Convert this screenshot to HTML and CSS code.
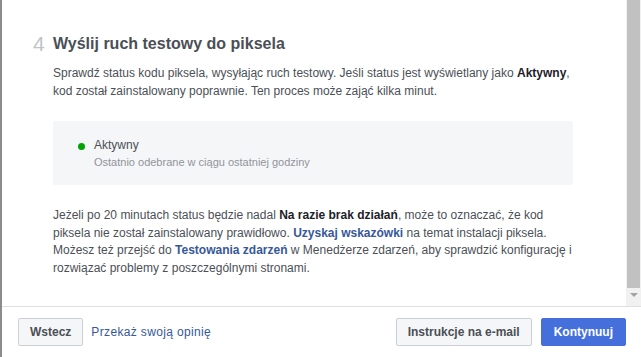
FILE: index.html
```html
<!DOCTYPE html>
<html lang="pl">
<head>
<meta charset="utf-8">
<link rel="stylesheet" href="styles.css">
</head>
<body>
<div class="frame">
  <div class="scrollarea">
    <div class="content">
      <div class="step">
        <div class="step-num">4</div>
        <div class="step-body">
          <h2 class="title">Wyślij ruch testowy do piksela</h2>
          <p class="text">Sprawdź status kodu piksela, wysyłając ruch testowy. Jeśli status jest wyświetlany jako <b>Aktywny</b>, kod został zainstalowany poprawnie. Ten proces może zająć kilka minut.</p>
          <div class="status-box">
            <span class="dot"></span>
            <div class="status-text">
              <div class="status-label">Aktywny</div>
              <div class="status-sub">Ostatnio odebrane w ciągu ostatniej godziny</div>
            </div>
          </div>
          <p class="text">Jeżeli po 20 minutach status będzie nadal <b>Na razie brak działań</b>, może to oznaczać, że kod piksela nie został zainstalowany prawidłowo. <a class="link">Uzyskaj wskazówki</a> na temat instalacji piksela. Możesz też przejść do <a class="link">Testowania zdarzeń</a> w Menedżerze zdarzeń, aby sprawdzić konfigurację i rozwiązać problemy z poszczególnymi stronami.</p>
        </div>
      </div>
    </div>
    <div class="scrollbar">
      <div class="thumb"></div>
      <div class="arrow"></div>
    </div>
  </div>
  <div class="footer">
    <div class="footer-left">
      <button class="btn">Wstecz</button>
      <a class="footer-link">Przekaż swoją opinię</a>
    </div>
    <div class="footer-right">
      <button class="btn">Instrukcje na e-mail</button>
      <button class="btn btn-primary">Kontynuuj</button>
    </div>
  </div>
</div>
</body>
</html>
```
FILE: styles.css
```css
* { box-sizing: border-box; }
html, body { margin: 0; padding: 0; }
body {
  width: 641px;
  height: 357px;
  overflow: hidden;
  background: #fff;
  font-family: "Liberation Sans", Arial, sans-serif;
  color: #4b4f56;
}
.frame {
  display: flex;
  flex-direction: column;
  height: 357px;
  border-left: 2px solid #8c8c8c;
}
.scrollarea {
  display: flex;
  height: 306px;
}
.content {
  flex: 1;
  padding: 31px 0 0 31px;
}
.step {
  display: flex;
}
.step-num {
  width: 20px;
  font-size: 21px;
  line-height: 26px;
  color: #bec3c9;
}
.step-body {
  width: 520px;
}
.title {
  margin: 0;
  font-size: 16px;
  line-height: 26px;
  font-weight: bold;
  color: #4b4f56;
}
.text {
  margin: 8px 0 0;
  font-size: 12px;
  line-height: 17.5px;
  color: #4b4f56;
}
.text b { color: #1d2129; }
.link {
  color: #365899;
  font-weight: bold;
}
.status-box {
  margin-top: 21px;
  height: 64px;
  background: #f5f6f7;
  border-radius: 2px;
  display: flex;
  align-items: flex-start;
  padding: 16px 0 0 25px;
}
.dot {
  width: 7px;
  height: 7px;
  border-radius: 50%;
  background: #00a400;
  margin-top: 6px;
  margin-right: 9px;
}
.status-label {
  font-size: 12px;
  line-height: 16px;
  color: #4b4f56;
}
.status-sub {
  margin-top: 2px;
  font-size: 11px;
  line-height: 14px;
  color: #90949c;
}
.status-box + .text { margin-top: 22px; }
.scrollbar {
  width: 15px;
  background: #f1f1f1;
  display: flex;
  flex-direction: column;
  align-items: center;
}
.thumb {
  width: 13px;
  height: 288px;
  background: #c1c1c1;
}
.arrow {
  margin-top: 5px;
  width: 0;
  height: 0;
  border-left: 4px solid transparent;
  border-right: 4px solid transparent;
  border-top: 4px solid #a3a3a3;
}
.footer {
  flex: 1;
  border-top: 1px solid #dddfe2;
  display: flex;
  justify-content: space-between;
  align-items: center;
  padding: 0 15px 0 16px;
}
.footer-left, .footer-right {
  display: flex;
  align-items: center;
}
.footer-left { gap: 8px; }
.footer-right { gap: 9px; }
.btn {
  height: 28px;
  padding: 0 11px;
  border: 1px solid #ccd0d5;
  border-radius: 2px;
  background: #f5f6f7;
  color: #4b4f56;
  font-family: "Liberation Sans", Arial, sans-serif;
  font-size: 12px;
  font-weight: bold;
}
.btn-primary {
  background: #4570dc;
  border-color: #4570dc;
  color: #fff;
  padding: 0 12px;
}
.footer-link {
  color: #365899;
  font-size: 12px;
  font-weight: normal;
  letter-spacing: 0.35px;
}
```
